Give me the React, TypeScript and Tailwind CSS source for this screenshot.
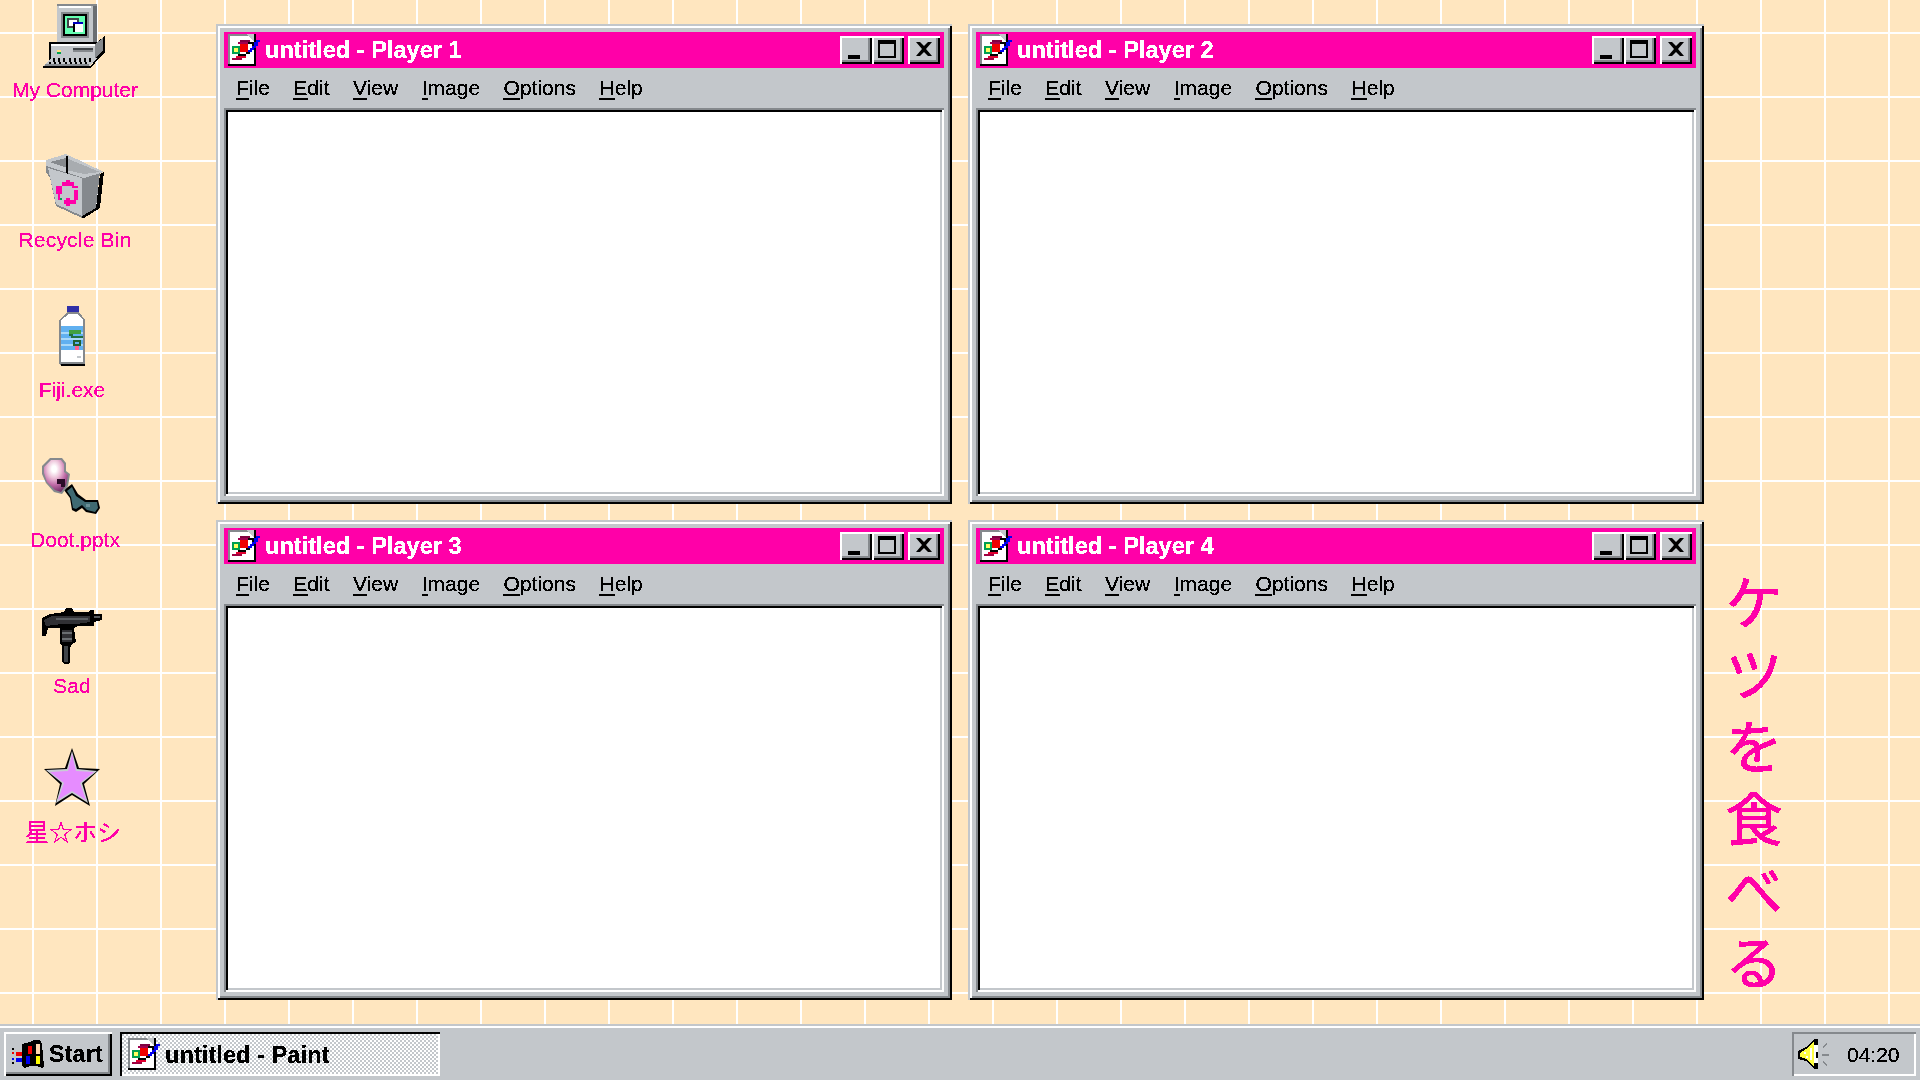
const menus = ['File', 'Edit', 'View', 'Image', 'Options', 'Help']

function PaintIcon() {
  return (
    <svg viewBox="0 0 17 16" width={34} height={32} shapeRendering="crispEdges" className="shrink-0">
      <rect x="0" y="0" width="14" height="16" fill="#000" />
      <rect x="0" y="0" width="13" height="15" fill="#85898d" />
      <rect x="1" y="1" width="12" height="14" fill="#fff" />
      <polygon points="9,0 13,0 13,4" fill="#c3c7cb" />
      <rect x="5" y="4" width="6" height="1" fill="#a00050" />
      <rect x="6" y="5" width="4" height="4" fill="#f00000" />
      <rect x="6" y="3" width="5" height="1" fill="#800040" />
      <rect x="10" y="4" width="3" height="1" fill="#000" />
      <rect x="12" y="4" width="1" height="4" fill="#000" />
      <rect x="2" y="6" width="4" height="4" fill="#00a050" />
      <rect x="3" y="7" width="2" height="2" fill="#ffff60" />
      <rect x="5" y="10" width="4" height="1" fill="#000" />
      <rect x="4" y="11" width="5" height="1" fill="#e00030" />
      <rect x="2" y="12" width="5" height="1" fill="#a00040" />
      <rect x="14" y="3" width="2" height="1" fill="#0000f0" />
      <rect x="13" y="4" width="2" height="2" fill="#0000f0" />
      <rect x="12" y="6" width="2" height="1" fill="#0000f0" />
      <rect x="11" y="7" width="2" height="1" fill="#0000f0" />
      <rect x="10" y="8" width="2" height="1" fill="#0000f0" />
      <rect x="9" y="9" width="2" height="1" fill="#000" />
    </svg>
  )
}

function ComputerIcon() {
  return (
    <svg viewBox="0 0 32 32" width={64} height={64} shapeRendering="crispEdges">
      <rect x="7" y="0" width="20" height="19" fill="#85898d" />
      <rect x="7" y="1" width="18" height="18" fill="#c3c7cb" />
      <rect x="8" y="1" width="16" height="1" fill="#fff" />
      <rect x="25" y="1" width="2" height="18" fill="#6a6e72" />
      <rect x="9" y="4" width="14" height="13" fill="#85898d" />
      <rect x="10" y="5" width="12" height="11" fill="#000" />
      <rect x="11" y="6" width="10" height="9" fill="#66ffb2" />
      <rect x="12" y="7" width="6" height="5" fill="#404448" />
      <rect x="13" y="8" width="4" height="3" fill="#fff" />
      <rect x="15" y="9" width="5" height="5" fill="#000" />
      <rect x="15" y="9" width="5" height="1" fill="#0000c0" />
      <rect x="16" y="10" width="4" height="4" fill="#fff" />
      <polygon points="3,19 27,19 31,16 31,24 27,28 3,28" fill="#000" />
      <polygon points="4,20 26,20 30,17 30,23 26,27 4,27" fill="#c3c7cb" />
      <polygon points="26,20 30,17 30,23 26,27" fill="#85898d" />
      <rect x="4" y="20" width="22" height="1" fill="#fff" />
      <rect x="15" y="22" width="10" height="1" fill="#404448" />
      <rect x="15" y="23" width="10" height="1" fill="#85898d" />
      <rect x="7" y="23" width="2" height="1" fill="#ffe080" />
      <rect x="7" y="24" width="2" height="1" fill="#00a050" />
      <polygon points="4,27 27,27 23,31 0,31" fill="#c3c7cb" />
      <rect x="0" y="31" width="24" height="1" fill="#000" />
      <rect x="1" y="30" width="22" height="1" fill="#85898d" />
      {[0, 1, 2, 3, 4, 5, 6, 7].map((i) => (
        <rect key={i} x={5 + i * 2.6} y="27" width="1" height="2" fill="#000" />
      ))}
      {[0, 1, 2, 3, 4, 5, 6, 7].map((i) => (
        <rect key={i} x={3 + i * 2.6} y="29" width="1" height="1" fill="#000" />
      ))}
      <polygon points="27,27 28,27 24,32 23,32" fill="#000" />
    </svg>
  )
}

function BinIcon() {
  return (
    <svg viewBox="0 0 29 32" width={58} height={64} shapeRendering="crispEdges">
      <polygon points="0,3 10,0 29,9 27,9 25,27 18,32 5,26 2,12 0,9" fill="#85898d" />
      <polygon points="0,3 10,0 29,9 19,12 0,6" fill="#c3c7cb" />
      <polygon points="2,4 10,2 27,9 19,10" fill="#85898d" />
      <polygon points="10,2 10,8 19,10 27,9" fill="#a8acb0" />
      <rect x="10" y="1" width="1" height="9" fill="#000" />
      <polygon points="1,7 18,12 18,31 5,25" fill="#c3c7cb" />
      <polygon points="25,27 27,10 29,9 27,27 19,32 18,32 18,31" fill="#000" />
      <rect x="8" y="14" width="6" height="2" fill="#ff00a8" />
      <rect x="10" y="13" width="2" height="1" fill="#ff00a8" />
      <rect x="13" y="16" width="3" height="1" fill="#ff00a8" />
      <rect x="5" y="16" width="3" height="4" fill="#ff00a8" />
      <rect x="6" y="20" width="1" height="3" fill="#ff00a8" />
      <rect x="14" y="18" width="2" height="5" fill="#ff00a8" />
      <rect x="9" y="23" width="6" height="2" fill="#ff00a8" />
      <rect x="10" y="22" width="2" height="4" fill="#ff00a8" />
      <rect x="7" y="22" width="1" height="1" fill="#00a050" />
    </svg>
  )
}

function BottleIcon() {
  return (
    <svg viewBox="0 0 14 30" width={28} height={60} shapeRendering="crispEdges">
      <rect x="4" y="0" width="6" height="3" fill="#3030a8" />
      <polygon points="4,3 10,3 13,7 13,29 12,30 2,30 0,29 0,7" fill="#85898d" />
      <rect x="1" y="29" width="12" height="1" fill="#000" />
      <polygon points="5,4 9,4 12,7 12,28 1,28 1,7" fill="#fff" />
      <rect x="1" y="10" width="11" height="12" fill="#60b0f0" />
      <rect x="1" y="13" width="11" height="1" fill="#a8d8f8" />
      <rect x="1" y="16" width="11" height="1" fill="#a8d8f8" />
      <rect x="1" y="19" width="11" height="1" fill="#a8d8f8" />
      <rect x="5" y="12" width="6" height="2" fill="#40a040" />
      <rect x="5" y="14" width="2" height="1" fill="#207040" />
      <rect x="6" y="15" width="6" height="1" fill="#207040" />
      <rect x="7" y="17" width="4" height="3" fill="#206030" />
      <rect x="8" y="18" width="2" height="1" fill="#60b0f0" />
      <rect x="8" y="20" width="2" height="2" fill="#ff6090" />
      <rect x="9" y="25" width="2" height="1" fill="#c3c7cb" />
    </svg>
  )
}

function SkullIcon() {
  return (
    <svg viewBox="0 0 58 56" width={58} height={56}>
      <defs>
        <radialGradient id="glow" cx="0.42" cy="0.28" r="0.8">
          <stop offset="0.12" stopColor="#fff" />
          <stop offset="0.36" stopColor="#ecc0d8" />
          <stop offset="0.62" stopColor="#c06ca8" />
          <stop offset="1" stopColor="#602058" />
        </radialGradient>
      </defs>
      <polygon points="22,32 30,26 36,36 44,42 56,42 58,50 54,56 44,54 40,50 34,54 30,52 28,40" fill="#000" />
      <polygon points="25,33 30,29 34,38 43,44 55,44 56,50 53,54 45,52 40,47 34,51 31,50 29,39" fill="#3f6a72" />
      <rect x="44" y="46" width="4" height="3" fill="#6a9098" />
      <path d="M8 0 H20 L24 5 V13 L28 16 L26 28 L20 36 L12 34 L4 25 L0 16 V8Z" fill="#85898d" />
      <path d="M9 2 H19 L22 6 V14 L26 17 L24 27 L19 34 L13 32 L5 24 L2 15 V9Z" fill="url(#glow)" />
      <rect x="15" y="21" width="8" height="5" fill="#2a0c28" />
      <rect x="19" y="26" width="4" height="3" fill="#2a0c28" />
    </svg>
  )
}

function UziIcon() {
  return (
    <svg viewBox="0 0 30 28" width={60} height={56} shapeRendering="crispEdges">
      <polygon points="0,5 4,3 11,2 12,0 15,0 16,2 23,2 24,1 26,1 26,3 30,3 30,6 26,7 26,9 18,9 16,10 17,17 15,18 14,20 14,27 13,28 11,28 10,27 10,19 9,18 9,10 3,10 2,14 0,14" fill="#000" />
      <polygon points="1,6 5,4 24,4 24,7 17,8 10,8 2,9" fill="#303034" />
      <rect x="7" y="5" width="16" height="1" fill="#585c60" />
      <rect x="10" y="11" width="5" height="6" fill="#303034" />
      <rect x="10" y="12" width="5" height="1" fill="#6a6e72" />
      <rect x="10" y="15" width="5" height="1" fill="#6a6e72" />
      <rect x="11" y="19" width="2" height="8" fill="#404448" />
      <rect x="26" y="4" width="3" height="1" fill="#585c60" />
    </svg>
  )
}

function StarIcon() {
  return (
    <svg viewBox="0 0 56 58" width={56} height={58}>
      <polygon points="28,0 35,20 56,21 40,36 46,58 28,47 11,58 16,36 0,21 21,20" fill="#000" />
      <polygon points="28,3 33,21 53,23 38,35 44,55 28,45 12,55 18,35 2,22 23,21" fill="#c8ccd4" />
      <polygon points="28,6 32,23 50,24 36,35 42,52 28,43 14,52 20,35 6,24 24,23" fill="#e68cff" />
    </svg>
  )
}

function WinIcon() {
  return (
    <svg viewBox="0 0 16 14" width={32} height={28} shapeRendering="crispEdges" className="shrink-0">
      <polygon points="5,2 9,1 11,0 14,0 15,2 16,13 15,14 12,13 9,13 6,14 5,13" fill="#000" />
      <rect x="8" y="3" width="2" height="4" fill="#f00000" />
      <rect x="12" y="2" width="2" height="5" fill="#ffd8b0" />
      <rect x="7" y="8" width="2" height="4" fill="#0000f0" />
      <rect x="12" y="8" width="2" height="4" fill="#ffff00" />
      <rect x="0" y="4" width="1" height="1" fill="#000" />
      <rect x="0" y="6" width="1" height="1" fill="#f00000" />
      <rect x="2" y="6" width="3" height="2" fill="#f00000" />
      <rect x="0" y="9" width="1" height="1" fill="#0000f0" />
      <rect x="2" y="9" width="3" height="2" fill="#0000f0" />
      <rect x="0" y="11" width="1" height="1" fill="#000" />
    </svg>
  )
}

function SpeakerIcon() {
  return (
    <svg viewBox="0 0 32 30" width={32} height={30} shapeRendering="crispEdges" className="shrink-0">
      <polygon points="16,0 20,0 20,30 16,30 8,22 0,20 0,12 8,8" fill="#000" />
      <polygon points="16,3 16,27 8,20 2,18 2,14 8,10" fill="#ffff40" />
      <rect x="12" y="9" width="2" height="12" fill="#fff" />
      <rect x="6" y="13" width="2" height="2" fill="#fff" />
      <rect x="8" y="17" width="2" height="2" fill="#fff" />
      <rect x="16" y="6" width="4" height="18" fill="#fff" />
      <rect x="18" y="13" width="2" height="6" fill="#000" />
      <polygon points="24,8 28,4 29,5 25,9" fill="#85898d" />
      <rect x="24" y="15" width="7" height="2" fill="#85898d" />
      <polygon points="24,23 25,22 29,26 28,27" fill="#85898d" />
    </svg>
  )
}

function DesktopIcon({ label, icon, height, iconClass = '', labelClass }: { label: string; icon: React.ReactNode; height: string; iconClass?: string; labelClass: string }) {
  return (
    <div className={`flex flex-col items-center ${height}`}>
      <div className={iconClass}>{icon}</div>
      <span className={`whitespace-nowrap leading-[24px] text-[#ff00a8] [filter:url(#crisp)] ${labelClass}`}>{label}</span>
    </div>
  )
}

function TitleButton({ children }: { children: React.ReactNode }) {
  return (
    <div className="flex h-7 w-8 items-center justify-center bg-[#c3c7cb] shadow-[inset_2px_2px_0_#fff,inset_-2px_-2px_0_#000,inset_-4px_-4px_0_#85898d]">
      {children}
    </div>
  )
}

function PaintWindow({ player }: { player: number }) {
  return (
    <div className="flex flex-col bg-[#c3c7cb] p-2 shadow-[inset_2px_2px_0_#c3c7cb,inset_-2px_-2px_0_#000,inset_4px_4px_0_#fff,inset_-4px_-4px_0_#85898d]">
      <div className="flex h-9 shrink-0 items-center bg-[#ff00a8] px-1">
        <PaintIcon />
        <span className="ml-[3px] whitespace-nowrap pt-[2px] text-[23.6px] font-bold text-white [filter:url(#crisp)]">untitled - Player {player}</span>
        <div className="ml-auto flex">
          <TitleButton>
            <span className="mt-[14px] mr-[4px] h-[4px] w-[12px] bg-black" />
          </TitleButton>
          <TitleButton>
            <span className="mr-[2px] mb-[2px] h-[18px] w-[18px] border-2 border-t-4 border-black" />
          </TitleButton>
          <div className="w-1" />
          <TitleButton>
            <svg viewBox="0 0 16 14" width={16} height={14} className="mb-[2px]">
              <path d="M0 0 H4 L8 4 L12 0 H16 L10 7 L16 14 H12 L8 10 L4 14 H0 L6 7 Z" fill="#000" />
            </svg>
          </TitleButton>
        </div>
      </div>
      <div className="flex h-10 shrink-0 items-center gap-[23.5px] pl-3 text-[21px] text-black [filter:url(#crisp)]">
        {menus.map((menu) => (
          <span key={menu}>
            <span className="underline decoration-2 underline-offset-[3px]">{menu[0]}</span>
            {menu.slice(1)}
          </span>
        ))}
      </div>
      <div className="flex-1 bg-white shadow-[inset_2px_2px_0_#85898d,inset_-2px_-2px_0_#fff,inset_4px_4px_0_#000,inset_-4px_-4px_0_#c3c7cb]" />
    </div>
  )
}

export default function App() {
  return (
    <div className="flex h-[1080px] w-[1920px] flex-col overflow-hidden font-['Liberation_Sans','Noto_Sans_CJK_JP',sans-serif]">
      <svg className="absolute h-0 w-0">
        <filter id="crisp" colorInterpolationFilters="sRGB">
          <feComponentTransfer>
            <feFuncA type="discrete" tableValues="0 1 1" />
          </feComponentTransfer>
        </filter>
      </svg>

      <div className="flex flex-1 bg-[#ffe6bf] bg-[linear-gradient(#fff_2px,transparent_2px),linear-gradient(90deg,#fff_2px,transparent_2px)] [background-position:32px_32px] [background-size:64px_64px]">
        <div className="flex w-[216px] shrink-0 flex-col pt-1 pr-[66px]">
          <DesktopIcon height="h-[150px]" labelClass="mt-[10px] text-[21px]" label="My Computer" icon={<ComputerIcon />} />
          <DesktopIcon height="h-[152px]" labelClass="mt-[10px] text-[21px] tracking-[0.2px]" label="Recycle Bin" icon={<BinIcon />} />
          <DesktopIcon height="h-[152px]" iconClass="mr-[4px]" labelClass="mt-[12px] mr-[6px] text-[21px]" label="Fiji.exe" icon={<BottleIcon />} />
          <DesktopIcon height="h-[150px]" iconClass="mr-[8px]" labelClass="mt-[14px] text-[21px]" label="Doot.pptx" icon={<SkullIcon />} />
          <DesktopIcon height="h-[140px]" iconClass="mr-[6px]" labelClass="mt-[10px] mr-[6px] text-[21px]" label="Sad" icon={<UziIcon />} />
          <DesktopIcon height="h-[100px]" iconClass="mr-[6px]" labelClass="mt-[15px] mr-[4px] text-[24px]" label="星☆ホシ" icon={<StarIcon />} />
        </div>

        <div className="grid grid-cols-[736px_736px] grid-rows-[480px_480px] gap-4 pt-6">
          {[1, 2, 3, 4].map((player) => (
            <PaintWindow key={player} player={player} />
          ))}
        </div>

        <div className="flex w-[100px] flex-col items-center self-end pb-[24px] text-[57px] leading-[72px] text-[#ff00a8] [-webkit-text-stroke:0.7px_#ff00a8] [filter:url(#crisp)]">
          {['ケ', 'ツ', 'を', '食', 'べ', 'る'].map((ch) => (
            <span key={ch}>{ch}</span>
          ))}
        </div>
      </div>

      <div className="flex h-14 shrink-0 items-center justify-between border-t-2 border-[#c3c7cb] bg-[#c3c7cb] px-1 pt-[6px] pb-1 shadow-[inset_0_2px_0_#fff]">
        <div className="flex h-11 gap-2">
          <div className="flex w-[108px] items-center gap-[5px] pl-2 shadow-[inset_2px_2px_0_#fff,inset_-2px_-2px_0_#000,inset_-4px_-4px_0_#85898d]">
            <WinIcon />
            <span className="text-[23px] font-bold tracking-[0.3px] text-black [filter:url(#crisp)]">Start</span>
          </div>
          <div className="flex w-[320px] items-center gap-[3px] bg-[conic-gradient(#fff_25%,#c3c7cb_0_50%,#fff_0_75%,#c3c7cb_0)] pl-2 shadow-[inset_2px_2px_0_#000,inset_-2px_-2px_0_#fff] [background-size:4px_4px]">
            <PaintIcon />
            <span className="pt-[3px] text-[23.7px] font-bold text-black [filter:url(#crisp)]">untitled - Paint</span>
          </div>
        </div>
        <div className="flex h-11 w-[124px] items-center gap-[17px] pl-[6px] shadow-[inset_2px_2px_0_#85898d,inset_-2px_-2px_0_#fff]">
          <SpeakerIcon />
          <span className="pt-[1px] text-[21px] text-black [filter:url(#crisp)]">04:20</span>
        </div>
      </div>
    </div>
  )
}
